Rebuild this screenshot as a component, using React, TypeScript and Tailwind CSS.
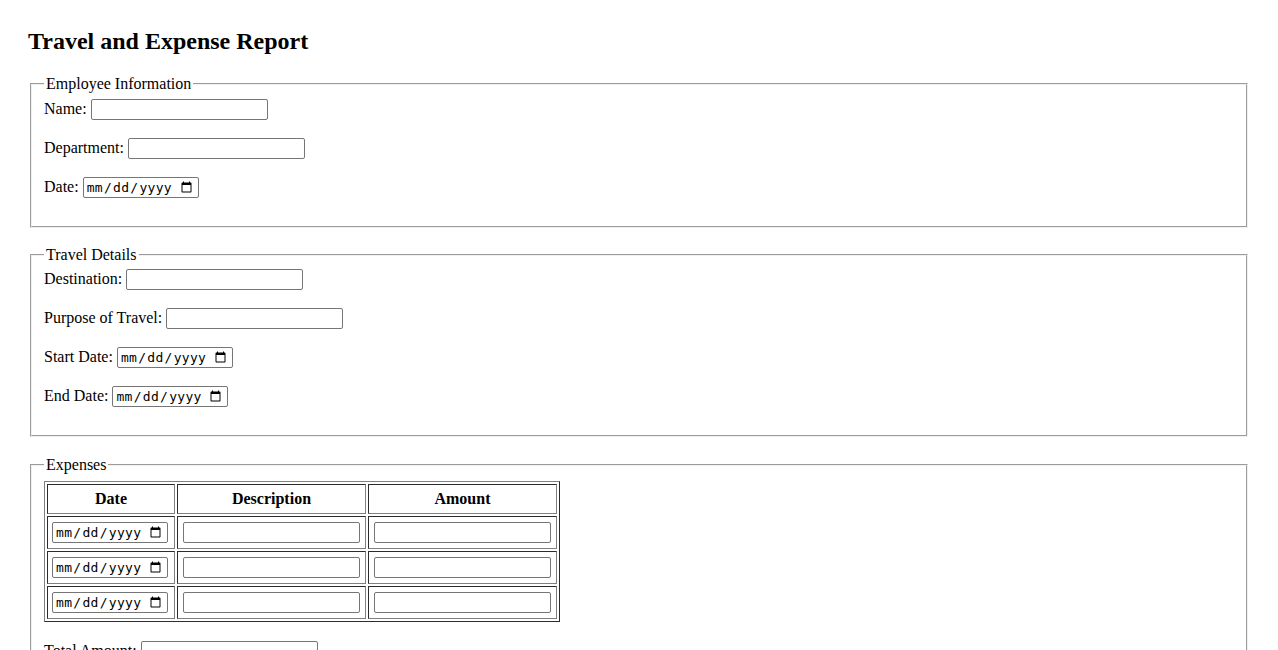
const serif = "font-['Liberation_Serif','Times_New_Roman',serif]"

const TextInput = () => (
  <input
    type="text"
    className="w-[177px] h-[21px] border border-[#767676] rounded-[2px] px-[2px] bg-white text-[13px] font-['Liberation_Sans',Arial,sans-serif]"
  />
)

const DateInput = () => (
  <input
    type="date"
    className="w-[116px] h-[21px] border border-[#767676] rounded-[2px] pl-[2px] pr-[3px] bg-white text-[13px] tracking-[0.3px] font-['DejaVu_Sans_Mono','Liberation_Mono',monospace]"
  />
)

const Row = ({ label, children }: { label: string; children: React.ReactNode }) => (
  <div className="flex items-center gap-[4px] h-[21px] mb-[18px]">
    <label className="pb-[2px]">{label}</label>
    {children}
  </div>
)

const Fieldset = ({
  legend,
  className,
  bodyClass,
  children,
}: {
  legend: string
  className: string
  bodyClass: string
  children: React.ReactNode
}) => (
  <fieldset className={`mx-[2px] px-[12px] pb-[10px] border-2 border-[#f0f0f0] [border-style:groove] ${className}`}>
    <legend className="px-[2px] leading-[18px]">{legend}</legend>
    <div className={bodyClass}>{children}</div>
  </fieldset>
)

const ExpenseRow = () => (
  <tr>
    <td className="p-[4px] border border-[#808080] [border-style:inset] h-[33px]">
      <div className="flex items-center h-[23px]">
        <DateInput />
      </div>
    </td>
    <td className="py-[4px] border border-[#808080] [border-style:inset]">
      <div className="flex items-center justify-center h-[23px]">
        <TextInput />
      </div>
    </td>
    <td className="py-[4px] border border-[#808080] [border-style:inset]">
      <div className="flex items-center justify-center h-[23px]">
        <TextInput />
      </div>
    </td>
  </tr>
)

export default function App() {
  return (
    <div className={`${serif} text-[16px] leading-[18px] text-black bg-white min-h-screen pt-[27px] px-[28px]`}>
      <h2 className="text-[24px] font-bold leading-[28px] mb-[20px]">Travel and Expense Report</h2>

      <Fieldset legend="Employee Information" className="mb-[18px]" bodyClass="pt-[6px]">
        <Row label="Name:"><TextInput /></Row>
        <Row label="Department:"><TextInput /></Row>
        <Row label="Date:"><DateInput /></Row>
      </Fieldset>

      <Fieldset legend="Travel Details" className="mb-[19px]" bodyClass="pt-[5px]">
        <Row label="Destination:"><TextInput /></Row>
        <Row label="Purpose of Travel:"><TextInput /></Row>
        <Row label="Start Date:"><DateInput /></Row>
        <Row label="End Date:"><DateInput /></Row>
      </Fieldset>

      <Fieldset legend="Expenses" className="mb-[18px]" bodyClass="pt-[4px]">
        <table className="mt-[3px] border-separate border-spacing-[2px] border border-[#808080] [border-style:outset]">
          <thead>
            <tr>
              <th className="w-[128px] h-[30px] p-[4px] border border-[#808080] [border-style:inset] font-bold text-center">Date</th>
              <th className="w-[189px] p-[4px] border border-[#808080] [border-style:inset] font-bold text-center">Description</th>
              <th className="w-[189px] p-[4px] border border-[#808080] [border-style:inset] font-bold text-center">Amount</th>
            </tr>
          </thead>
          <tbody>
            <ExpenseRow />
            <ExpenseRow />
            <ExpenseRow />
          </tbody>
        </table>
        <div className="mt-[19px]">
          <Row label="Total Amount:"><TextInput /></Row>
        </div>
      </Fieldset>
    </div>
  )
}
